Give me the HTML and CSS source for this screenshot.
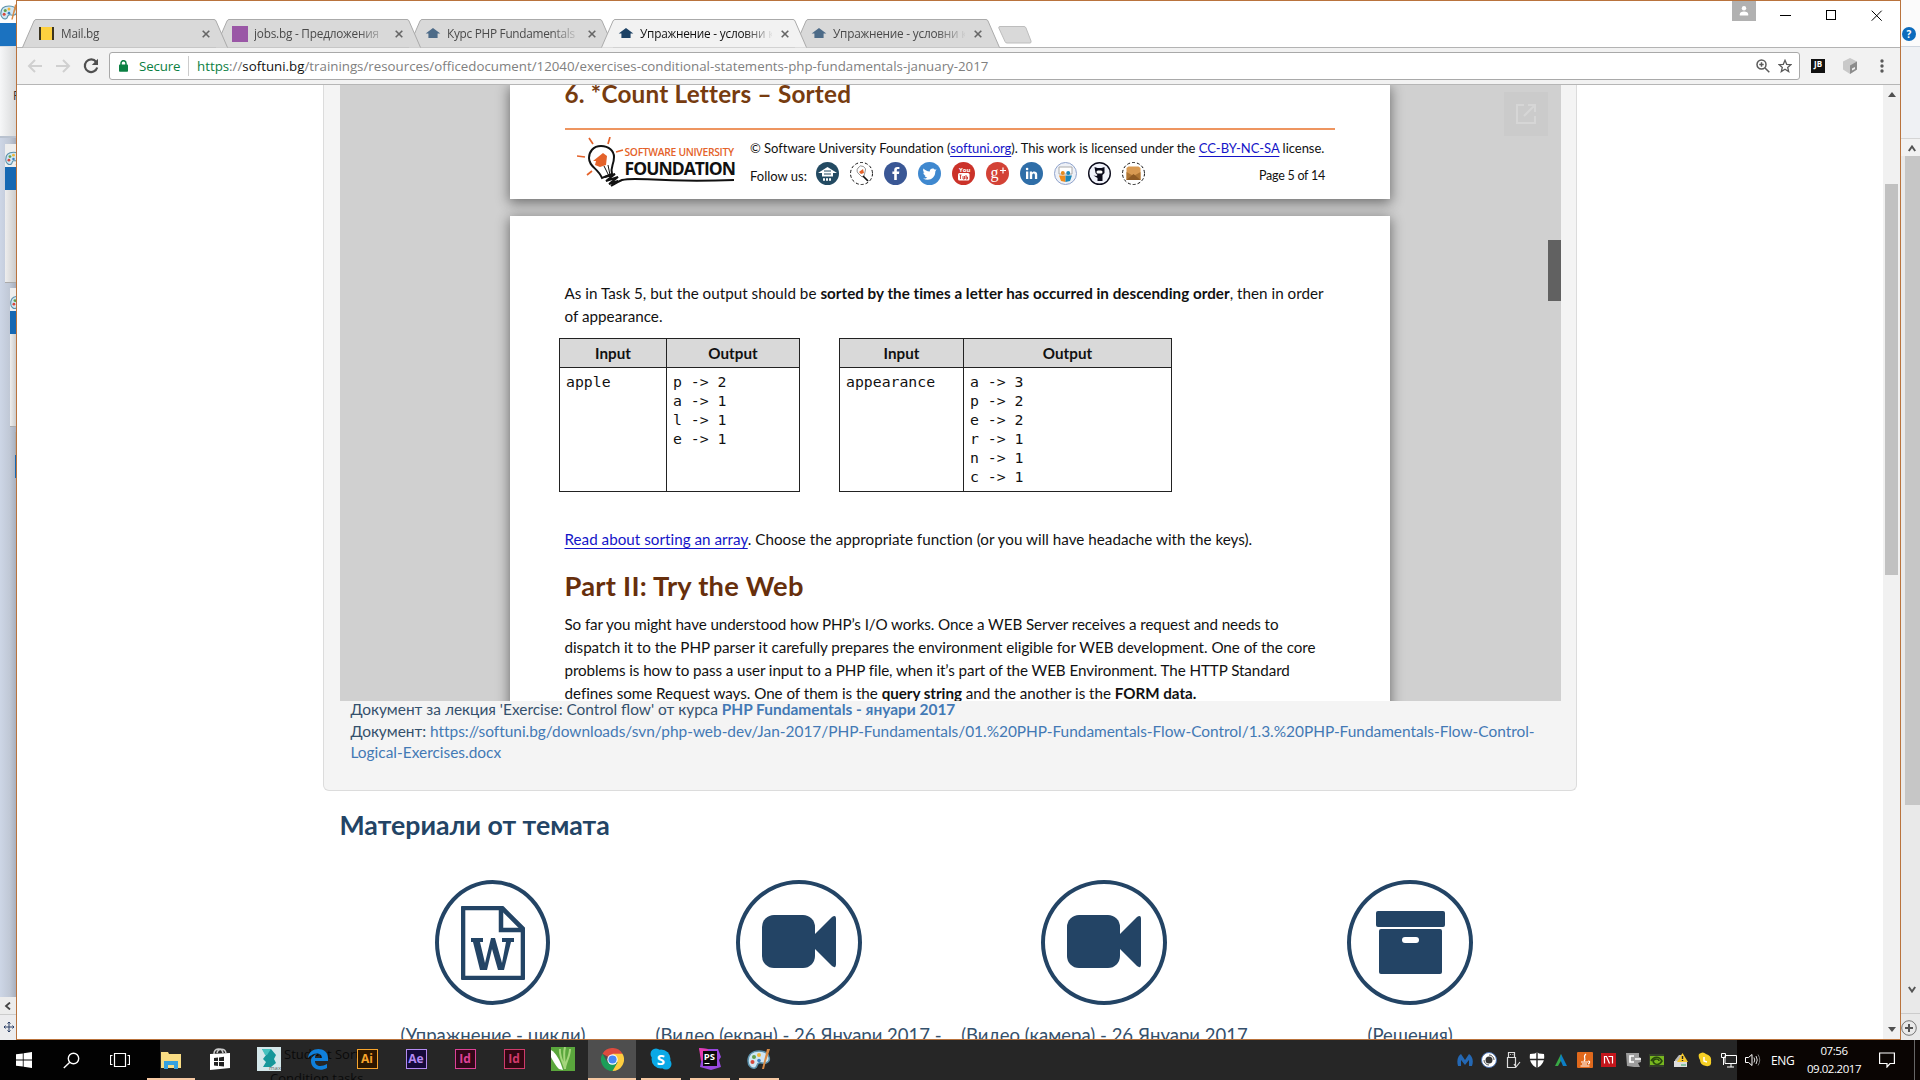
FILE: index.html
```html
<!DOCTYPE html>
<html lang="bg">
<head>
<meta charset="utf-8">
<title>Упражнение - условни конструкции</title>
<link rel="stylesheet" href="styles.css">
</head>
<body>
<svg class="defs" width="0" height="0">
  <symbol id="palette" viewBox="0 0 24 24"><path d="M12 4C5 4 1 8 1 14c0 5 4 8 7 7 3-1 1-4 4-5 2-1 4 1 7 0 3-1 4-3 3-6-1-4-5-6-10-6z" fill="#cfe6f3" stroke="#5b91ab" stroke-width="1.5"/><circle cx="7" cy="10" r="2" fill="#63a04b"/><circle cx="5.500" cy="15" r="2" fill="#d5483c"/><circle cx="12" cy="8" r="2" fill="#f0b73a"/><circle cx="12" cy="13.500" r="1.800" fill="#3b7fc0"/><path d="M15 22L20 2l3 0-4 12-2 8z" fill="#d98b45"/></symbol>
  <symbol id="cap" viewBox="0 0 16 12"><path d="M8 0L16 6H13V11H3V6H0z"/></symbol>
  <symbol id="camera" viewBox="0 0 74 54"><rect x="0" y="0" width="53" height="53" rx="12"/><path d="M52 20L70 2q4-3 4 2v45q0 5-4 2L52 33z"/></symbol>
  <symbol id="tabshape" viewBox="0 0 206 29"><path d="M.5 28.500L12 2q.8-1.500 2-1.500H192q1.500 0 2 1.500L205.500 28.500"/></symbol>
</svg>
<div class="desktop">
  <div class="screen">
    <aside class="behind-left">
      <div class="bl-title"><svg width="18" height="20"><use href="#palette"/></svg></div>
      <div class="bl-blue"></div>
      <div class="bl-ribbon">F</div>
      <div class="bl-canvas">
        <div class="bl-win one"><svg width="17" height="18"><use href="#palette"/></svg><i></i></div>
        <div class="bl-win two"><svg width="17" height="18"><use href="#palette"/></svg><i></i></div>
        <div class="bl-win three"><i></i></div>
      </div>
      <div class="bl-arrow"><svg width="8" height="8" viewBox="0 0 8 8"><path d="M6 .5L2 4l4 3.500" fill="none" stroke="#444" stroke-width="1.800"/></svg></div>
      <div class="bl-move"><svg width="12" height="12" viewBox="0 0 12 12"><path d="M6 1v10M1 6h10M4.500 2.500L6 1l1.500 1.500M4.500 9.500L6 11l1.500-1.500M2.500 4.500L1 6l1.500 1.500M9.500 4.500L11 6 9.500 7.500" fill="none" stroke="#2b3f66" stroke-width="1"/></svg></div>
    </aside>

    <main class="window">
      <header class="tabstrip">
        <div class="tabs">
          <div class="tab t1"><svg class="shape"><use href="#tabshape"/></svg><span class="mailico"></span><span class="title">Mail.bg</span><svg class="x" viewBox="0 0 8 8"><path d="M.7.7l6.600 6.600M7.300.7L.7 7.300"/></svg></div>
          <div class="tab t2"><svg class="shape"><use href="#tabshape"/></svg><span class="jobsico"></span><span class="title">jobs.bg - Предложения</span><svg class="x" viewBox="0 0 8 8"><path d="M.7.7l6.600 6.600M7.300.7L.7 7.300"/></svg></div>
          <div class="tab t3"><svg class="shape"><use href="#tabshape"/></svg><svg class="cap"><use href="#cap"/></svg><span class="title">Курс PHP Fundamentals</span><svg class="x" viewBox="0 0 8 8"><path d="M.7.7l6.600 6.600M7.300.7L.7 7.300"/></svg></div>
          <div class="tab t4 active"><svg class="shape"><use href="#tabshape"/></svg><svg class="cap"><use href="#cap"/></svg><span class="title">Упражнение - условни к</span><svg class="x" viewBox="0 0 8 8"><path d="M.7.7l6.600 6.600M7.300.7L.7 7.300"/></svg></div>
          <div class="tab t5"><svg class="shape"><use href="#tabshape"/></svg><svg class="cap"><use href="#cap"/></svg><span class="title">Упражнение - условни к</span><svg class="x" viewBox="0 0 8 8"><path d="M.7.7l6.600 6.600M7.300.7L.7 7.300"/></svg></div>
          <svg class="newtab" width="34" height="18" viewBox="0 0 34 18"><path d="M2 .5H26q1.500 0 2 1.500L33 15q.5 2-1 2H9q-1.500 0-2-1.500L.8 2Q.5.5 2 .5z" fill="#d9d9d9" stroke="#bdbdbd"/></svg>
        </div>
        <div class="controls">
          <span class="user"><svg width="10" height="10" viewBox="0 0 10 10"><circle cx="5" cy="2.300" r="2.200" fill="#fff"/><path d="M.8 9.500V8.200Q1 5.500 5 5.500T9.200 8.200v1.300z" fill="#fff"/></svg></span>
          <svg class="min" width="11" height="11"><path d="M0 5.500h11"/></svg>
          <svg class="max" width="11" height="11"><rect x=".5" y=".5" width="9" height="9"/></svg>
          <svg class="close" width="12" height="12"><path d="M.7.7l10 10M10.700.7l-10 10"/></svg>
        </div>
      </header>
      <nav class="toolbar">
        <svg class="nav" width="16" height="14" viewBox="0 0 16 14"><path d="M15 7H2M8 1L2 7l6 6" fill="none" stroke="#d0d0d0" stroke-width="2"/></svg>
        <svg class="nav fwd" width="16" height="14" viewBox="0 0 16 14"><path d="M1 7h13M8 1l6 6-6 6" fill="none" stroke="#d0d0d0" stroke-width="2"/></svg>
        <svg class="nav rel" width="16" height="16" viewBox="0 0 16 16"><path d="M13.200 4A6.300 6.300 0 1 0 14.200 9.500" fill="none" stroke="#505050" stroke-width="2.200"/><path d="M15 .8V7H8.800z" fill="#505050"/></svg>
        <div class="address">
          <svg class="lock" width="9" height="12" viewBox="0 0 9 12"><path d="M2 5V3.200a2.500 2.500 0 0 1 5 0V5" fill="none" stroke="#0b8043" stroke-width="1.500"/><rect x="0" y="4.500" width="9" height="7.200" rx=".8" fill="#0b8043"/></svg>
          <span class="secure">Secure</span>
          <span class="url"><b>https</b>://<em>softuni.bg</em>/trainings/resources/officedocument/12040/exercises-conditional-statements-php-fundamentals-january-2017</span>
          <svg class="zoom" width="14" height="14" viewBox="0 0 14 14"><g fill="none" stroke="#5a5a5a" stroke-width="1.500"><circle cx="5.500" cy="5.500" r="4.500"/><path d="M9 9l4.300 4.300M5.500 3.300v4.400M3.300 5.500h4.400"/></g></svg>
          <svg class="star" width="14" height="14" viewBox="0 0 14 14"><path d="M7 1.300l1.700 4 4.300.3-3.300 2.800 1 4.200L7 10.300l-3.700 2.300 1-4.200L1 5.600l4.300-.3z" fill="none" stroke="#5a5a5a" stroke-width="1.300"/></svg>
        </div>
        <span class="jb">JB</span>
        <svg class="cube" width="14" height="16" viewBox="0 0 14 16"><path d="M7 0l7 3.500v8L7 16 0 11.500v-8z" fill="#c9c9c9"/><path d="M7 7.500l7-4v8L7 16z" fill="#8c8c8c"/><path d="M9 10.500l3-1.500v2l-3 1.500z" fill="#eee"/></svg>
        <svg class="dots" width="4" height="14" viewBox="0 0 4 14"><circle cx="2" cy="2" r="1.700"/><circle cx="2" cy="7" r="1.700"/><circle cx="2" cy="12" r="1.700"/></svg>
      </nav>

      <div class="viewport">
        <div class="page">
          <section class="panel">
            <div class="embed">
              <article class="sheet first">
                <h2>6. *Count Letters – Sorted</h2>
                <footer class="docfoot">
                  <svg class="bulb" width="160" height="52" viewBox="0 0 160 52">
                    <g fill="none" stroke="#e4622a" stroke-width="1.700"><path d="M12 1l4 6M33 0l-2 7M0 19l8 1M39 15l7-2M10 38l5-4"/></g>
                    <path d="M24 9c-8 0-12 6-12 12 0 9 9 10 13 20l10-4c-2-7 2-9 2-17 0-6-5-11-13-11z" fill="#fff" stroke="#111" stroke-width="2"/>
                    <path d="M16 24l10-8 4 3-1 9-6 2-5-2 1-4z" fill="#e4622a"/><path d="M27 29l5 10M31 28l2 10" stroke="#111" stroke-width="1"/>
                    <path d="M28 40l10-3-9 7 12-4-9 7 9-3-7 5q6-4 11-6c15-4 30 3 112 0" fill="none" stroke="#111" stroke-width="2"/>
                  </svg>
                  <div class="brand"><div class="b1">SOFTWARE UNIVERSITY</div><div class="b2">FOUNDATION</div></div>
                  <div class="foottext">
                    <p>© Software University Foundation (<a>softuni.org</a>). This work is licensed under the <a>CC-BY-NC-SA</a> license.</p>
                    <div class="follow"><span class="fu">Follow us:</span>
                      <svg viewBox="0 0 23 23"><circle cx="11.500" cy="11.500" r="11.500" fill="#234a62"/><path d="M2 11l9.500-6L21 11h-4v3.500H6V11z" fill="#fff"/><path d="M6 17h11M8 9h7M8 12h7" stroke="#234a62" stroke-width="1"/><path d="M7 17.500h9" stroke="#fff" stroke-width="2.500" stroke-dasharray="2 1"/></svg>
                      <svg viewBox="0 0 23 23"><circle cx="11.500" cy="11.500" r="11" fill="#fff" stroke="#111" stroke-dasharray="3 2"/><path d="M8 6a4 4 0 0 1 7 4l-1 4-2 1-3-3a4 4 0 0 1-1-6z" fill="#fff" stroke="#777" stroke-width=".8"/><path d="M9 10l4-3 1 4-3 1z" fill="#e4622a"/><path d="M13 14l5 5" stroke="#111" stroke-width="1.700"/></svg>
                      <svg viewBox="0 0 23 23"><circle cx="11.500" cy="11.500" r="11.500" fill="#3a5795"/><path d="M12.800 18v-6h2.200l.3-2.400h-2.500V8.200c0-.8.3-1.200 1.300-1.200h1.300V5h-2c-2.200 0-3.200 1.200-3.200 3v1.600H8.400V12h1.800v6z" fill="#fff"/></svg>
                      <svg viewBox="0 0 23 23"><circle cx="11.500" cy="11.500" r="11.500" fill="#3f88cf"/><path d="M18.500 7.300l-1.600.5c-1.200-2-5-1.700-5.200 1.600C9 9.300 7.200 8.200 5.500 6.500c-.8 1.500-.4 3.200 1 4.200l-1.200-.3c0 1.500 1 2.600 2.500 3H6.600c.4 1.200 1.400 1.900 2.700 2-1.300 1-2.800 1.300-4.300 1.100 6 3.200 12.400-.2 12.300-7z" fill="#fff"/></svg>
                      <svg viewBox="0 0 23 23"><circle cx="11.500" cy="11.500" r="11.500" fill="#cb3229"/><rect x="6" y="11" width="11.500" height="7.500" rx="1.500" fill="#fff"/><path d="M7.500 13h2M8.500 13v4M11 14v3h1.500v-3M14 13v4h1.500v-2H14" stroke="#cb3229" fill="none" stroke-width=".9"/><text x="7" y="9.500" class="ytt">You</text></svg>
                      <svg viewBox="0 0 23 23"><circle cx="11.500" cy="11.500" r="11.500" fill="#d34236"/><text x="4.500" y="15.500" class="gp">g</text><path d="M14 8.500h6M17 5.500v6" stroke="#fff" stroke-width="1.200"/></svg>
                      <svg viewBox="0 0 23 23"><circle cx="11.500" cy="11.500" r="11.500" fill="#2f6ea8"/><path d="M6 9.500h2.300V17H6zM9.800 9.500H12v1c1-1.700 5.200-1.700 5.200 1.800V17h-2.300v-4c0-2.300-2.700-2-2.700 0v4H9.800z" fill="#fff"/><circle cx="7.100" cy="7" r="1.300" fill="#fff"/></svg>
                      <svg viewBox="0 0 23 23"><circle cx="11.500" cy="11.500" r="11" fill="#eef1f7" stroke="#8fa3cc"/><path d="M5 5h13v7H5z" fill="#fff" stroke="#aaa"/><circle cx="8.800" cy="11" r="2" fill="#e68a1e"/><circle cx="14.200" cy="11" r="2" fill="#1c86b8"/><path d="M5 13.500h6.500V20L7 19z" fill="#f08c1c"/><path d="M11.500 13.500H18L16 19l-4.500 1z" fill="#1c86b8"/></svg>
                      <svg viewBox="0 0 23 23"><circle cx="11.500" cy="11.500" r="10.800" fill="#f1f3fb" stroke="#0a0a1a" stroke-width="1.400"/><path d="M6.500 5l3 1h4l3-1v6l-2 2v6h-5v-3l-4-2.500 3 .5 1-1-2-2z" fill="#0a0a1a"/><rect x="8.500" y="8.500" width="6" height="3" rx="1.500" fill="#fff"/></svg>
                      <svg viewBox="0 0 23 23"><circle cx="11.500" cy="11.500" r="11" fill="#fff" stroke="#111" stroke-dasharray="3 2"/><path d="M4.500 6l2-1.500h10l2 1.500v12h-14z" fill="#d99a52"/><path d="M4.500 10l7 4 7-4v8h-14z" fill="#ad7433"/><path d="M4.500 18l7-6 7 6z" fill="#8e5a24"/></svg>
                      <span class="pg">Page 5 of 14</span>
                    </div>
                  </div>
                </footer>
              </article>
              <article class="sheet second">
                <p class="task">As in Task 5, but the output should be <b>sorted by the times a letter has occurred in descending order</b>, then in order<br>of appearance.</p>
                <div class="tables">
                  <table class="ta"><tr><th>Input</th><th>Output</th></tr><tr><td>apple</td><td>p -&gt; 2<br>a -&gt; 1<br>l -&gt; 1<br>e -&gt; 1</td></tr></table>
                  <table class="tb"><tr><th>Input</th><th>Output</th></tr><tr><td>appearance</td><td>a -&gt; 3<br>p -&gt; 2<br>e -&gt; 2<br>r -&gt; 1<br>n -&gt; 1<br>c -&gt; 1</td></tr></table>
                </div>
                <p class="read"><a>Read about sorting an array</a>. Choose the appropriate function (or you will have headache with the keys).</p>
                <h1>Part II: Try the Web</h1>
                <p class="body"><span>So far you might have understood how PHP’s I/O works. Once a WEB Server receives a request and needs to</span>
                <span>dispatch it to the PHP parser it carefully prepares the environment eligible for WEB development. One of the core</span>
                <span>problems is how to pass a user input to a PHP file, when it’s part of the WEB Environment. The HTTP Standard</span>
                <span>defines some Request ways. One of them is the <b>query string</b> and the another is the <b>FORM data.</b></span></p>
              </article>
              <span class="popout"><svg width="20" height="20" viewBox="0 0 20 20"><path d="M8 1H1v18h18v-7M12 1h7v7M19 1L8 12" fill="none" stroke="#d6d6d6" stroke-width="2"/></svg></span>
              <span class="docthumb"></span>
            </div>
            <p>Документ за лекция 'Exercise: Control flow' от курса <a><b>PHP Fundamentals - януари 2017</b></a></p>
            <p class="path">Документ: <a>https://softuni.bg/downloads/svn/php-web-dev/Jan-2017/PHP-Fundamentals/01.%20PHP-Fundamentals-Flow-Control/1.3.%20PHP-Fundamentals-Flow-Control-</a></p>
            <p><a>Logical-Exercises.docx</a></p>
          </section>
          <h3>Материали от темата</h3>
          <div class="materials">
            <div class="mat"><div class="ring narrow"><svg width="64" height="74" viewBox="0 0 64 74"><path d="M2 2h39l21 21v49H2z" fill="none" stroke="#234465" stroke-width="4.600" stroke-linejoin="round"/><path d="M40 3v21h21" fill="none" stroke="#234465" stroke-width="4.500"/><path d="M10 32h12v4h-3l5 21 6-25h4l7 25 4-21h-4v-4h12v4h-3l-7 28h-6l-6-21-5 21h-7l-7-28h-2z" fill="#234465"/></svg></div><p>(Упражнение - цикли)</p></div>
            <div class="mat"><div class="ring"><svg class="cam" width="74" height="54"><use href="#camera"/></svg></div><p>(Видео (екран) - 26 Януари 2017 -</p></div>
            <div class="mat"><div class="ring"><svg class="cam" width="74" height="54"><use href="#camera"/></svg></div><p>(Видео (камера) - 26 Януари 2017</p></div>
            <div class="mat"><div class="ring"><svg width="69" height="63" viewBox="0 0 69 63"><rect width="69" height="16" rx="2" fill="#234465"/><rect x="3" y="18" width="63" height="45" rx="2" fill="#234465"/><rect x="26" y="26" width="17" height="6" rx="3" fill="#fff"/></svg></div><p>(Решения)</p></div>
          </div>
        </div>
        <div class="scroll"><svg width="8" height="5"><path d="M0 5L4 0l4 5z"/></svg><i></i><svg width="8" height="5"><path d="M0 0l4 5 4-5z"/></svg></div>
      </div>
    </main>

    <aside class="behind-right">
      <div class="br-top"><span>?</span></div>
      <div class="br-ribbon"></div>
      <div class="br-up"><svg width="8" height="7"><path d="M.8 6L4 1.500 7.200 6" fill="none" stroke="#555" stroke-width="2"/></svg></div>
      <div class="br-thumb"></div>
      <div class="br-down"><svg width="8" height="7"><path d="M.8 1L4 5.500 7.200 1" fill="none" stroke="#555" stroke-width="2"/></svg></div>
      <div class="br-plus"><svg width="16" height="16" viewBox="0 0 16 16"><circle cx="8" cy="8" r="7.300" fill="none" stroke="#777"/><path d="M8 4v8M4 8h8" stroke="#555" stroke-width="2"/></svg></div>
    </aside>
  </div>

  <footer class="taskbar">
    <div class="start">
      <svg width="16" height="16" viewBox="0 0 16 16"><path d="M0 2.300L6.800 1.400V7.600H0zM7.600 1.300L16 0V7.600H7.600zM0 8.400H6.800V14.600L0 13.700zM7.600 8.400H16V16L7.600 14.700z" fill="#fff"/></svg>
      <svg width="17" height="17" viewBox="0 0 17 17"><g fill="none" stroke="#fff" stroke-width="1.400"><circle cx="10.500" cy="6.500" r="5.200"/><path d="M6.800 10.200L.8 16"/></g></svg>
      <svg width="20" height="14" viewBox="0 0 20 14"><path d="M4.500.5h11v13h-11zM2.500 2.500h-2v9h2M17.500 2.500h2v9h-2" fill="none" stroke="#fff" stroke-width="1.200"/></svg>
    </div>
    <div class="apps">
      <div class="ghost"><span>Student Sorting</span><span>Condition tasks</span></div>
      <div class="app first run"><svg width="22" height="20" viewBox="0 0 22 20"><path d="M1 2h7l1 2h12v14H1z" fill="#f8dc84"/><path d="M4 19v-8h14v8h-4v-4H8v4z" fill="#35a1e0"/></svg></div>
      <div class="app"><svg width="22" height="24" viewBox="0 0 22 24"><path d="M1 7l20-1v15L1 23z" fill="#fff"/><path d="M5 7c0-6 8-7 9-1M8 6c1-5 8-5 9 0" fill="none" stroke="#ccc" stroke-width="1.500"/><path d="M5 11l4-.5V14H5zM10 10.400l5-.6V14h-5zM5 15h4v4l-4-.4zM10 15h5v4.500l-5-.4z" fill="#222"/></svg></div>
      <div class="app"><svg width="24" height="24" viewBox="0 0 24 24"><rect width="24" height="24" fill="#d4e7ea"/><path d="M5 2h9l5 6-2 4 2 4-5 4H6l3-5-3-3 3-4z" fill="#16979a"/><path d="M5 2h9l-4 6H8z" fill="#45c2bf"/><text x="12" y="23" class="mx">max</text></svg></div>
      <div class="app"><svg width="22" height="22" viewBox="0 0 22 22"><path d="M1 10C2-2 21-2 21 10v3H8c0 6 7 6 12 3v4C13 24 4 21 4 13c0-4 3-6 6-7-2 1-2 3-2 4h7c0-6-9-6-14 0z" fill="#0f7fdb"/></svg></div>
      <div class="app"><span class="ad ai">Ai</span></div>
      <div class="app"><span class="ad ae">Ae</span></div>
      <div class="app"><span class="ad id">Id</span></div>
      <div class="app"><span class="ad id2">Id</span></div>
      <div class="app"><svg width="24" height="24" viewBox="0 0 24 24"><rect width="24" height="24" fill="#5aa63c"/><path d="M9 2c-1 8 4 14 5 20M14 0c-2 8 0 14 0 22M19 2c0 8-5 14-5 20" stroke="#a5d67c" stroke-width="2" fill="none"/><path d="M0 3c5 3 9 10 12 20l-4-1C4 18 1 12 0 10z" fill="#fff"/></svg></div>
      <div class="app run on"><svg width="23" height="23" viewBox="0 0 24 24"><path d="M12 12L1.600 6A12 12 0 0 1 22.400 6z" fill="#dd4b3e"/><path d="M1.600 6A12 12 0 0 0 12 24L17.200 15 12 12 6.800 15z" fill="#1b9e58"/><path d="M12 24A12 12 0 0 0 22.400 6H12l5.200 9z" fill="#fdcd40"/><circle cx="12" cy="12" r="5.400" fill="#fff"/><circle cx="12" cy="12" r="4.300" fill="#4788f4"/></svg></div>
      <div class="app run"><svg width="22" height="22" viewBox="0 0 22 22"><circle cx="11" cy="11" r="9.500" fill="#0aa9e6"/><circle cx="6" cy="6" r="5.500" fill="#0aa9e6"/><circle cx="16" cy="16" r="5.500" fill="#0aa9e6"/><text x="11" y="16.500" class="sk">S</text></svg></div>
      <div class="app run"><svg width="24" height="24" viewBox="0 0 24 24"><path d="M1 1l9 1 10 0 3 8-2 3 2 7-10 3L2 20 4 10z" fill="#9748e0"/><path d="M1 1l9 1-2 10-5 2z" fill="#e53bb0"/><rect x="5" y="4" width="14" height="15" fill="#0a0a0a"/><text x="5.800" y="12.500" class="ps">PS</text><path d="M6.500 16.500h5" stroke="#fff"/></svg></div>
      <div class="app run"><svg width="24" height="24" viewBox="0 0 24 24"><use href="#palette"/></svg></div>
    </div>
    <div class="tray">
      <svg viewBox="0 0 16 16"><path d="M1 14C-1 7 2 3 4 2l4 6 4-6c3 2 5 6 3 12h-3V8l-4 5-4-5v6z" fill="#2468b4"/></svg>
      <svg viewBox="0 0 16 16"><circle cx="8" cy="8" r="7.500" fill="#fff" stroke="#4b73b3"/><circle cx="8" cy="8" r="3.500" fill="#333"/><path d="M8 3a5 5 0 0 1 5 5M8 13a5 5 0 0 1-5-5" stroke="#555" fill="none"/></svg>
      <svg viewBox="0 0 16 16"><path d="M3.500 5V.5h6V5M2.500 5.500h8v10h-8zM5 2.500h.8M7.500 2.500h.8M9 12l2 3 4-5" fill="none" stroke="#ddd" stroke-width="1.200"/></svg>
      <svg viewBox="0 0 16 16"><path d="M8 0l2 1.500L15 2c1 6-1 11-7 14C2 13 0 8 1 2l5-.5z" fill="#fff"/><path d="M8 0v16M0 7.500h16" stroke="#262626" stroke-width="1.400"/></svg>
      <svg viewBox="0 0 16 16"><path d="M2 14L8 2l1 5-4 7z" fill="#39a845"/><path d="M8 2l6 12h-4L7 7z" fill="#0d7fc5"/></svg>
      <svg viewBox="0 0 16 16"><rect width="16" height="16" rx="1" fill="#e0691c"/><path d="M9 2c-4 3 1 4-2 7M4 10h7M5 12h5M3.500 14h9M11 9c3 0 1 3 0 3" fill="none" stroke="#fff" stroke-width="1.200"/></svg>
      <svg viewBox="0 0 16 16"><rect y="1" width="15" height="14" fill="#c4161c"/><path d="M3.500 11.500V4.500h2l3 7M7.500 4.500h4v7" fill="none" stroke="#fff" stroke-width="1.200"/></svg>
      <svg viewBox="0 0 16 16"><path d="M1 1h13v4l2 1v4l-3 1 2 4H9L2 14z" fill="#9c9c9c"/><path d="M9 4H5v6h4M10 7h6" fill="none" stroke="#fff" stroke-width="1.700"/></svg>
      <svg viewBox="0 0 16 16"><rect y="2" width="15" height="13" fill="#33402a"/><rect x="1" y="4" width="14" height="9" fill="#78b720"/><path d="M2 9c3-5 8-5 11 0-3 5-8 4-9 0 2-3 6-2 6 0" stroke="#27480c" fill="none" stroke-width="1.500"/></svg>
      <svg viewBox="0 0 16 16"><path d="M1 9h13v6H1z" fill="#ddd"/><path d="M2 8l4-5h3v6H2z" fill="#bbb"/><path d="M9.500 1l5.500 9H4z" fill="#f6ca2f"/><path d="M9.500 4v3M9.500 8v1" stroke="#222" stroke-width="1.400"/><path d="M8 13h5" stroke="#3a6"/></svg>
      <svg viewBox="0 0 16 16"><path d="M2 2q4-3 7 0 6 2 5 7 1 6-5 5-6-1-6-6-2-3-1-6z" fill="#f5cf25"/><path d="M7 5v4l3 1" stroke="#fff" fill="none" stroke-width="1.500"/></svg>
      <svg viewBox="0 0 16 16"><path d="M4 3.500h11.500v8H4zM10 12v3M6 15h7M.5 1.500h4v4h-4zM2.500 5v8" fill="none" stroke="#fff"/></svg>
      <div class="sys">
        <svg viewBox="0 0 16 16"><path d="M.5 5.500h3l3.500-3v11l-3.500-3h-3z" fill="none" stroke="#fff"/><path d="M9 5.500q1.500 2.500 0 5M11 4q2.500 4 0 8" fill="none" stroke="#ddd"/><path d="M13 2.500q3.500 5.500 0 11" fill="none" stroke="#777"/></svg>
        <span class="eng">ENG</span>
        <div class="clock">07:56<br>09.02.2017</div>
        <svg class="ac" viewBox="0 0 16 16"><path d="M.6 1h14.800v10.500H11L8 15v-3.500H.6z" fill="none" stroke="#fff" stroke-width="1.200"/></svg>
        <i></i>
      </div>
    </div>
  </footer>
</div>
</body>
</html>
```
FILE: styles.css
```css
* { box-sizing: border-box; }
body { margin: 0; overflow: hidden; font-family: "Open Sans", sans-serif; }
h1, h2, h3, p { margin: 0; }
svg { flex: none; display: block; }
.defs { position: absolute; }
.desktop { width: 1920px; height: 1080px; display: flex; flex-direction: column; overflow: hidden; }
.screen { display: flex; height: 1040px; }

/* window showing on the left */
.behind-left { width: 16px; display: flex; flex-direction: column; overflow: hidden; background: #c8d1e0; box-shadow: inset -6px 0 6px -4px #0004; }
.bl-title { height: 23px; background: #fdfdfd; padding: 2px 0 0 0; }
.bl-blue { height: 23px; background: #1b72c0; }
.bl-ribbon { height: 92px; background: linear-gradient(90deg, #f6f7f8, #d8d9da); border-top: 1px solid #d5dbe3; border-bottom: 2px solid #b9c2cf; font: 12px/98px "Open Sans", sans-serif; padding-left: 13px; color: #333; }
.bl-canvas { height: 859px; background: linear-gradient(90deg, #cdd6e6, #c0c8d6 60%, #a8afbd); padding-top: 6px; }
.bl-win { height: 139px; margin-bottom: 5px; background: linear-gradient(90deg, #eee, #ccc); border-bottom: 1px solid #aaa; }
.bl-win svg { height: 23px; padding-top: 5px; background: #eee; width: 17px; }
.bl-win i { display: block; height: 23px; background: #1668b3; }
.bl-win.one { margin-left: 5px; }
.bl-win.two { margin-left: 10px; }
.bl-win.three { margin-left: 15px; padding-top: 23px; background: #aaa; height: 46px; }
.bl-arrow { height: 18px; background: #ececec; border-bottom: 1px solid #ccc; padding: 5px 0 0 4px; }
.bl-move { height: 25px; background: #ececee; padding: 6px 0 0 3px; }

/* browser window */
.window { width: 1885px; border: 1px solid #b9733d; display: flex; flex-direction: column; overflow: hidden; background: #fff; }
.tabstrip { height: 47px; display: flex; justify-content: space-between; border-bottom: 1px solid #b3b3b3; flex: none; }
.tabs { display: flex; padding: 18px 0 0 5px; height: 47px; }
.tab { position: relative; width: 206px; height: 29px; margin-right: -13px; display: flex; align-items: center; padding-left: 17px; font-size: 11.8px; letter-spacing: -.22px; color: #4a4a4a; }
.shape { position: absolute; left: 0; top: 0; width: 206px; height: 29px; fill: #d9d9d9; stroke: #aaa; z-index: -1; }
.t1 { z-index: 5; }
.t2 { z-index: 4; }
.t3 { z-index: 3; letter-spacing: -.27px; }
.t5 { z-index: 2; }
.tab.active { z-index: 9; color: #111; }
.active .shape { fill: #f2f2f2; }
.mailico { width: 15px; height: 13px; background: #fdd03f; border: solid #3b3420; border-width: 0 2px; }
.jobsico { width: 16px; height: 16px; background: #9a57a6; }
.cap { width: 16px; height: 11px; fill: #4d6b88; }
.active .cap { fill: #1d4265; }
.mailico + .title { margin-left: 7px; }
.title { margin: -1px 0 0 6px; width: 132px; overflow: hidden; white-space: nowrap; -webkit-mask-image: linear-gradient(90deg, #000 104px, transparent 134px); }
.x { position: absolute; left: 180px; top: 11px; width: 8px; height: 8px; stroke: #666; stroke-width: 1.6; fill: none; }
.newtab { margin: 7px 0 0 11px; }
.controls { display: flex; width: 168px; }
.controls svg { fill: none; stroke: #000; }
.user { width: 24px; height: 20px; background: #b1b1b1; display: flex; justify-content: center; padding-top: 5px; margin-right: 24px; }
.controls .user svg { stroke: none; }
.min { margin-top: 9px; margin-right: 35px; }
.max { margin-top: 9px; margin-right: 34px; }
.close { margin-top: 9px; }
.toolbar { height: 37px; flex: none; background: #f2f2f2; border-bottom: 1px solid #b6b6b6; display: flex; align-items: center; padding-left: 10px; }
.nav { margin-right: 12px; }
.nav.rel { margin: 0 10px 0 0; }
.address { width: 1691px; height: 28px; background: #fff; border: 1px solid #a9a9a9; border-radius: 3px; display: flex; align-items: center; font-size: 13.3px; padding-left: 9px; white-space: nowrap; }
.secure { margin-left: 11px; width: 50px; letter-spacing: -.15px; color: #0b8043; border-right: 1px solid #ccc; line-height: 20px; }
.url { margin-left: 8px; color: #808080; width: 1559px; }
.url b { font-weight: 400; color: #0b8043; }
.url em { font-style: normal; color: #111; }
.star { margin-left: 8px; }
.jb { width: 14px; height: 14px; background: #111; color: #fff; font: bold 8px/9px "Open Sans", sans-serif; text-align: center; margin-left: 11px; }
.cube { margin: 0 23px 0 18px; }
.dots { fill: #5a5a5a; }

.viewport { display: flex; flex: 1; min-height: 0; overflow: hidden; }
.page { width: 1866px; padding-left: 306px; font-family: Lato, "Open Sans", sans-serif; }
.panel { width: 1254px; height: 706px; padding-left: 16px; background: #f4f4f4; border: 1px solid #dcdcdc; border-top: 0; border-radius: 0 0 6px 6px; color: #34506c; font-size: 15.45px; }
.panel a { color: #4379b5; }
.panel > p { margin-left: 10.5px; height: 21.5px; line-height: 21.5px; white-space: nowrap; }
.panel > .path { letter-spacing: -.02px; }
.embed { position: relative; width: 1221px; height: 616px; margin-bottom: -2px; overflow: hidden; background: #d0d0d0; padding-left: 170px; color: #111; font-size: 15.2px; }
.sheet { width: 880px; background: #fff; padding-left: 54.5px; box-shadow: 0 3px 12px 1px #0007; }
.sheet p { white-space: nowrap; }
.first { height: 114px; margin-bottom: 17px; padding-top: 1px; }
.second { height: 600px; padding-top: 66px; letter-spacing: .025px; }
.sheet a { color: #1414c8; text-decoration: underline; text-underline-offset: 3px; }
h2 { font-size: 24.3px; letter-spacing: .2px; line-height: 26px; height: 42px; color: #773c10; margin-top: -5px; white-space: nowrap; }
.docfoot { width: 770px; border-top: 2px solid #ee9560; margin-top: 5px; display: flex; padding-left: 12px; }
.bulb { margin-top: 7px; margin-right: -112px; }
.brand { width: 113px; padding-top: 15px; font-family: "Open Sans", sans-serif; white-space: nowrap; }
.b1 { font-size: 10.3px; letter-spacing: -.3px; line-height: 14px; color: #e4622a; font-weight: 600; }
.b2 { font-weight: 700; font-size: 17.5px; letter-spacing: -.95px; line-height: 18px; color: #111; }
.foottext { margin-left: 12.5px; font-size: 13px; }
.foottext p { line-height: 20px; margin-top: 8px; letter-spacing: -.028px; }
.follow { display: flex; gap: 11px; margin-top: 4px; align-items: center; }
.follow svg { width: 23px; height: 23px; }
.fu { width: 55px; padding-top: 5px; white-space: nowrap; }
.pg { margin-left: 103px; white-space: nowrap; padding-top: 4px; font-size: 12.5px; letter-spacing: -.25px; }
.ytt { font: bold 6px "Open Sans", sans-serif; fill: #fff; }
.gp { font: 16px "Liberation Serif", serif; fill: #fff; }
.task { line-height: 23px; }
.tables { display: flex; margin: 10px 0 0 -5.5px; gap: 39px; }
table { border-collapse: collapse; height: 154px; table-layout: fixed; }
.ta { width: 241px; }
.tb { width: 333px; }
.ta th:first-child { width: 107px; }
.tb th:first-child { width: 124px; }
th, td { border: 1px solid #222; padding: 0; }
th { background: #d9d9d9; height: 29px; }
td { vertical-align: top; font: 14.8px/19.1px "DejaVu Sans Mono", monospace; letter-spacing: 0; padding: 4px 0 0 6px; }
.read { margin-top: 36px; line-height: 23px; }
h1 { font-size: 27.3px; letter-spacing: .25px; line-height: 30px; color: #672f0c; margin-top: 20px; }
.body { line-height: 23px; margin-top: 12px; }
.body span { display: block; letter-spacing: -.031px; }
.body span:nth-child(1) { letter-spacing: -.094px; }
.body span:nth-child(3) { letter-spacing: -.073px; }
.popout { position: absolute; left: 1164px; top: 7px; width: 44px; height: 44px; background: #cbcbcb; display: flex; align-items: center; justify-content: center; }
.docthumb { position: absolute; right: 0; top: 155px; width: 13px; height: 61px; background: #616161; }
h3 { margin: 17px 0 0 16.5px; font-size: 26.7px; line-height: 34px; color: #234465; }
.materials { margin: 38px 0 0 17px; width: 1223px; display: grid; grid-template-columns: repeat(4, 1fr); }
.mat { display: flex; flex-direction: column; align-items: center; color: #34506c; font-size: 18.5px; }
.mat p { margin-top: 17px; line-height: 26px; white-space: nowrap; }
.ring { width: 126px; height: 125px; border: 4px solid #234465; border-radius: 50%; display: flex; align-items: center; justify-content: center; }
.narrow { width: 115px; }
.cam { fill: #234465; margin-top: -2px; }
.scroll { width: 17px; background: #f1f1f1; padding: 7px 0; display: flex; flex-direction: column; align-items: center; fill: #505050; }
.scroll i { width: 13px; height: 391px; background: #c1c1c1; margin: 87px 0 auto; }

/* window showing on the right */
.behind-right { width: 19px; display: flex; flex-direction: column; background: #e9e9e9; overflow: hidden; }
.br-top { height: 47px; background: #fbfbfb; border-bottom: 1px solid #cfd6df; padding: 27px 0 0 1px; }
.br-top span { display: block; width: 14px; height: 14px; border-radius: 50%; background: #0d6cbd; color: #fff; font: bold 10px/14px "Open Sans", sans-serif; text-align: center; }
.br-ribbon { height: 92px; background: #eff1f4; border-bottom: 1px solid #d5d5d5; }
.br-up { height: 17px; padding: 6px 0 0 7px; background: #f2f2f2; }
.br-thumb { height: 649px; width: 15px; margin-left: 4px; background: #c6c6c6; }
.br-down { height: 209px; padding: 181px 0 0 7px; border-bottom: 1px solid #ccc; }
.br-plus { padding-top: 6px; }

/* taskbar */
.taskbar { height: 40px; display: flex; background: #262626; color: #fff; }
.start { width: 160px; background: #020202; display: flex; align-items: center; padding-left: 16px; gap: 31px; }
.start svg:last-child { margin-left: -1px; }
.apps { position: relative; width: 1297px; display: flex; }
.ghost { position: absolute; left: 110px; top: 2px; color: #0a0a0a; font-size: 13px; line-height: 24px; display: flex; flex-direction: column; white-space: nowrap; }
.ghost span:first-child { margin-left: 14px; }
.app { position: relative; width: 48px; margin-right: 1px; height: 40px; display: flex; align-items: center; justify-content: center; padding-bottom: 2px; }
.app.first { margin-left: -13px; }
.run::after { content: ""; position: absolute; left: 4px; right: 4px; bottom: 0; height: 2px; background: #f6c8a2; }
.first::after, .on::after { left: 0; right: 0; }
.on { background: #4e4e4e; }
.ad { width: 21px; height: 20px; border: 1.5px solid; font: bold 12px/17px "Open Sans", sans-serif; text-align: center; }
.ai { color: #f7a42c; background: #2c1700; }
.ae { color: #b48bf2; background: #150a3a; }
.id { color: #dd4197; background: #310719; }
.id2 { color: #cf3a6b; background: #310712; }
.mx { font: 6px "Open Sans", sans-serif; fill: #666; }
.sk { font: bold 15px "Open Sans", sans-serif; fill: #fff; text-anchor: middle; }
.ps { font: bold 9.5px "Open Sans", sans-serif; fill: #fff; }
.tray { display: flex; align-items: center; gap: 8px; }
.tray svg { width: 16px; height: 16px; }
.sys { height: 40px; width: 183px; background: #0a0503; display: flex; align-items: center; padding-left: 8px; margin-left: -8px; font-size: 12px; }
.eng { margin-left: 10px; width: 35px; letter-spacing: -.4px; }
.clock { width: 56px; font-size: 11.5px; letter-spacing: -.45px; text-align: center; line-height: 18px; margin-right: 17px; }
.sys i { width: 1px; height: 40px; background: #666; margin-left: 19px; }
```
